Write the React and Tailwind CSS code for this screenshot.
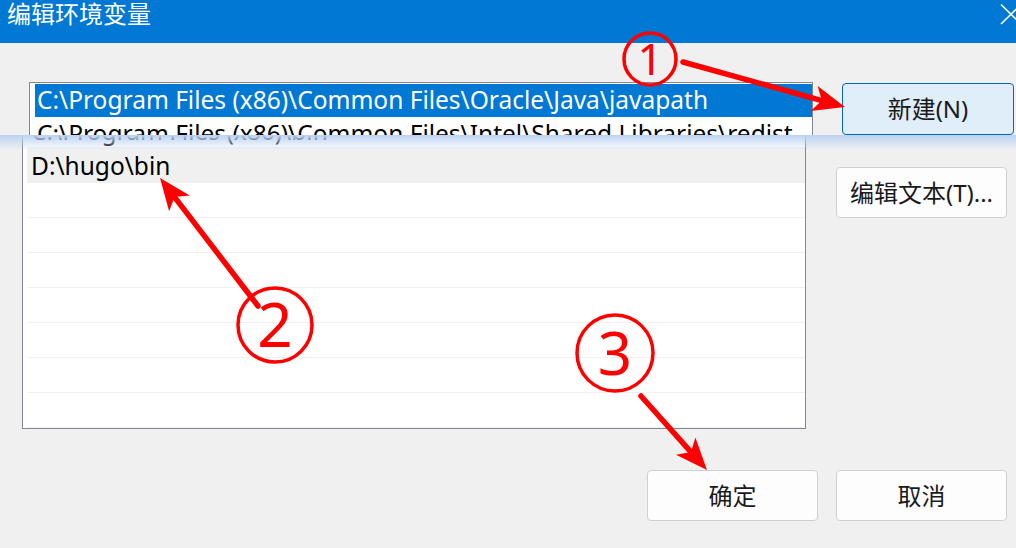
import React from "react";

const font = "font-['Noto_Sans','Noto_Sans_CJK_SC',sans-serif]";

const Arrow = ({ x1, y1, x2, y2 }) => {
  const dx = x2 - x1;
  const dy = y2 - y1;
  const len = Math.hypot(dx, dy);
  const ux = dx / len;
  const uy = dy / len;
  const nx = -uy;
  const ny = ux;
  const L = 32;
  const W = 13;
  const bx = x2 - ux * L;
  const by = y2 - uy * L;
  const mx = x2 - ux * (L - 8);
  const my = y2 - uy * (L - 8);
  const pts = [
    [x2, y2],
    [bx + nx * W, by + ny * W],
    [mx, my],
    [bx - nx * W, by - ny * W],
  ]
    .map((p) => p.join(","))
    .join(" ");
  return (
    <g>
      <line x1={x1} y1={y1} x2={mx} y2={my} stroke="#ff0000" strokeWidth="5.5" strokeLinecap="round" />
      <polygon points={pts} fill="#ff0000" />
    </g>
  );
};

const Badge = ({ cx, cy, r, n, size }) => (
  <g>
    <circle cx={cx} cy={cy} r={r} fill="none" stroke="#ff0000" strokeWidth="3.5" />
    <text
      x={cx}
      y={cy + size * 0.36}
      textAnchor="middle"
      fontSize={size}
      fill="#ff0000"
      fontFamily="Noto Sans, sans-serif"
    >
      {n}
    </text>
  </g>
);

const Button = ({ children, active }) => (
  <div
    className={`flex items-center justify-center rounded-[4px] border text-[24px] text-[#1a1a1a] ${
      active ? "w-[172px] h-[52px] bg-[#e0eef9] border-[#0067c0]" : "w-[171px] h-[51px] bg-[#fdfdfd] border-[#d0d0d0]"
    }`}
  >
    {children}
  </div>
);

const lowerRows = ["C:\\Program Files (x86)\\Common Files\\Oracle\\Java\\javapath", "C:\\Program Files (x86)\\bin", "D:\\hugo\\bin", "", "", "", "", "", "", ""];

export default function App() {
  return (
    <div className={`relative w-[1016px] h-[548px] overflow-hidden bg-[#f0f0f0] ${font}`}>
      {/* title bar */}
      <div className="h-[43px] bg-[#0078d4] flex items-start justify-between">
        <span className="text-white text-[24px] leading-[28px] pl-[7px]">编辑环境变量</span>
        <svg width="20" height="30" viewBox="0 0 20 30" className="mt-[3px]">
          <line x1="5" y1="1.5" x2="25" y2="21" stroke="white" strokeWidth="1.6" />
          <line x1="5" y1="21" x2="25" y2="1.5" stroke="white" strokeWidth="1.6" />
        </svg>
      </div>

      {/* dialog body (lower screenshot) */}
      <div className="flex pl-[22px] pt-[34px]">
        <div className="w-[784px] h-[352px] border border-[#828790] bg-white pl-[4px] overflow-hidden">
          {lowerRows.map((t, i) => (
            <div
              key={i}
              className={`h-[35px] border-b border-[#f0f0f0] flex items-center pl-[4px] pt-[2px] text-[24.5px] text-black whitespace-nowrap ${
                i === 2 ? "bg-[#f0f0f0]" : "bg-white"
              }`}
            >
              {t}
            </div>
          ))}
        </div>
        <div className="ml-[30px] pt-[6px] flex flex-col gap-[33px]">
          <Button>新建(N)</Button>
          <Button>编辑文本(T)...</Button>
        </div>
      </div>
      <div className="flex justify-end gap-[18px] pr-[9px] mt-[41px]">
        <Button>确定</Button>
        <Button>取消</Button>
      </div>

      {/* pasted top strip */}
      <div className="absolute left-0 top-[43px] w-full h-[92px] bg-[#f0f0f0] flex pl-[29px] pt-[39px] overflow-hidden">
        <div className="w-[784px] h-[80px] border-t border-l border-r border-[#828790] bg-white pl-[5px] pt-[1px] overflow-hidden">
          <div className="h-[33px] bg-[#0078d4] text-white flex items-center pl-[2px] text-[24.5px] whitespace-nowrap">
            C:\Program Files (x86)\Common Files\Oracle\Java\javapath
          </div>
          <div className="h-[34px] flex items-center pl-[2px] text-[24.5px] text-black whitespace-nowrap">
            C:\Program Files (x86)\Common Files\Intel\Shared Libraries\redist
          </div>
        </div>
        <div className="ml-[29px] mt-[1px]">
          <Button active>新建(N)</Button>
        </div>
      </div>
      <div className="absolute left-0 top-[135px] w-full h-[15px] bg-linear-to-b from-[#bcd2f2] to-[#f0f0f0]/0" />

      {/* annotations */}
      <svg className="absolute inset-0 pointer-events-none" width="1016" height="548" viewBox="0 0 1016 548">
        <Badge cx={650} cy={59} r={26} n="1" size={44} />
        <Arrow x1={683} y1={62} x2={845} y2={107} />
        <Badge cx={275} cy={325} r={37} n="2" size={62} />
        <Arrow x1={258} y1={306} x2={160} y2={178} />
        <Badge cx={615} cy={353} r={38} n="3" size={60} />
        <Arrow x1={641} y1={396} x2={707} y2={470} />
      </svg>
    </div>
  );
}
